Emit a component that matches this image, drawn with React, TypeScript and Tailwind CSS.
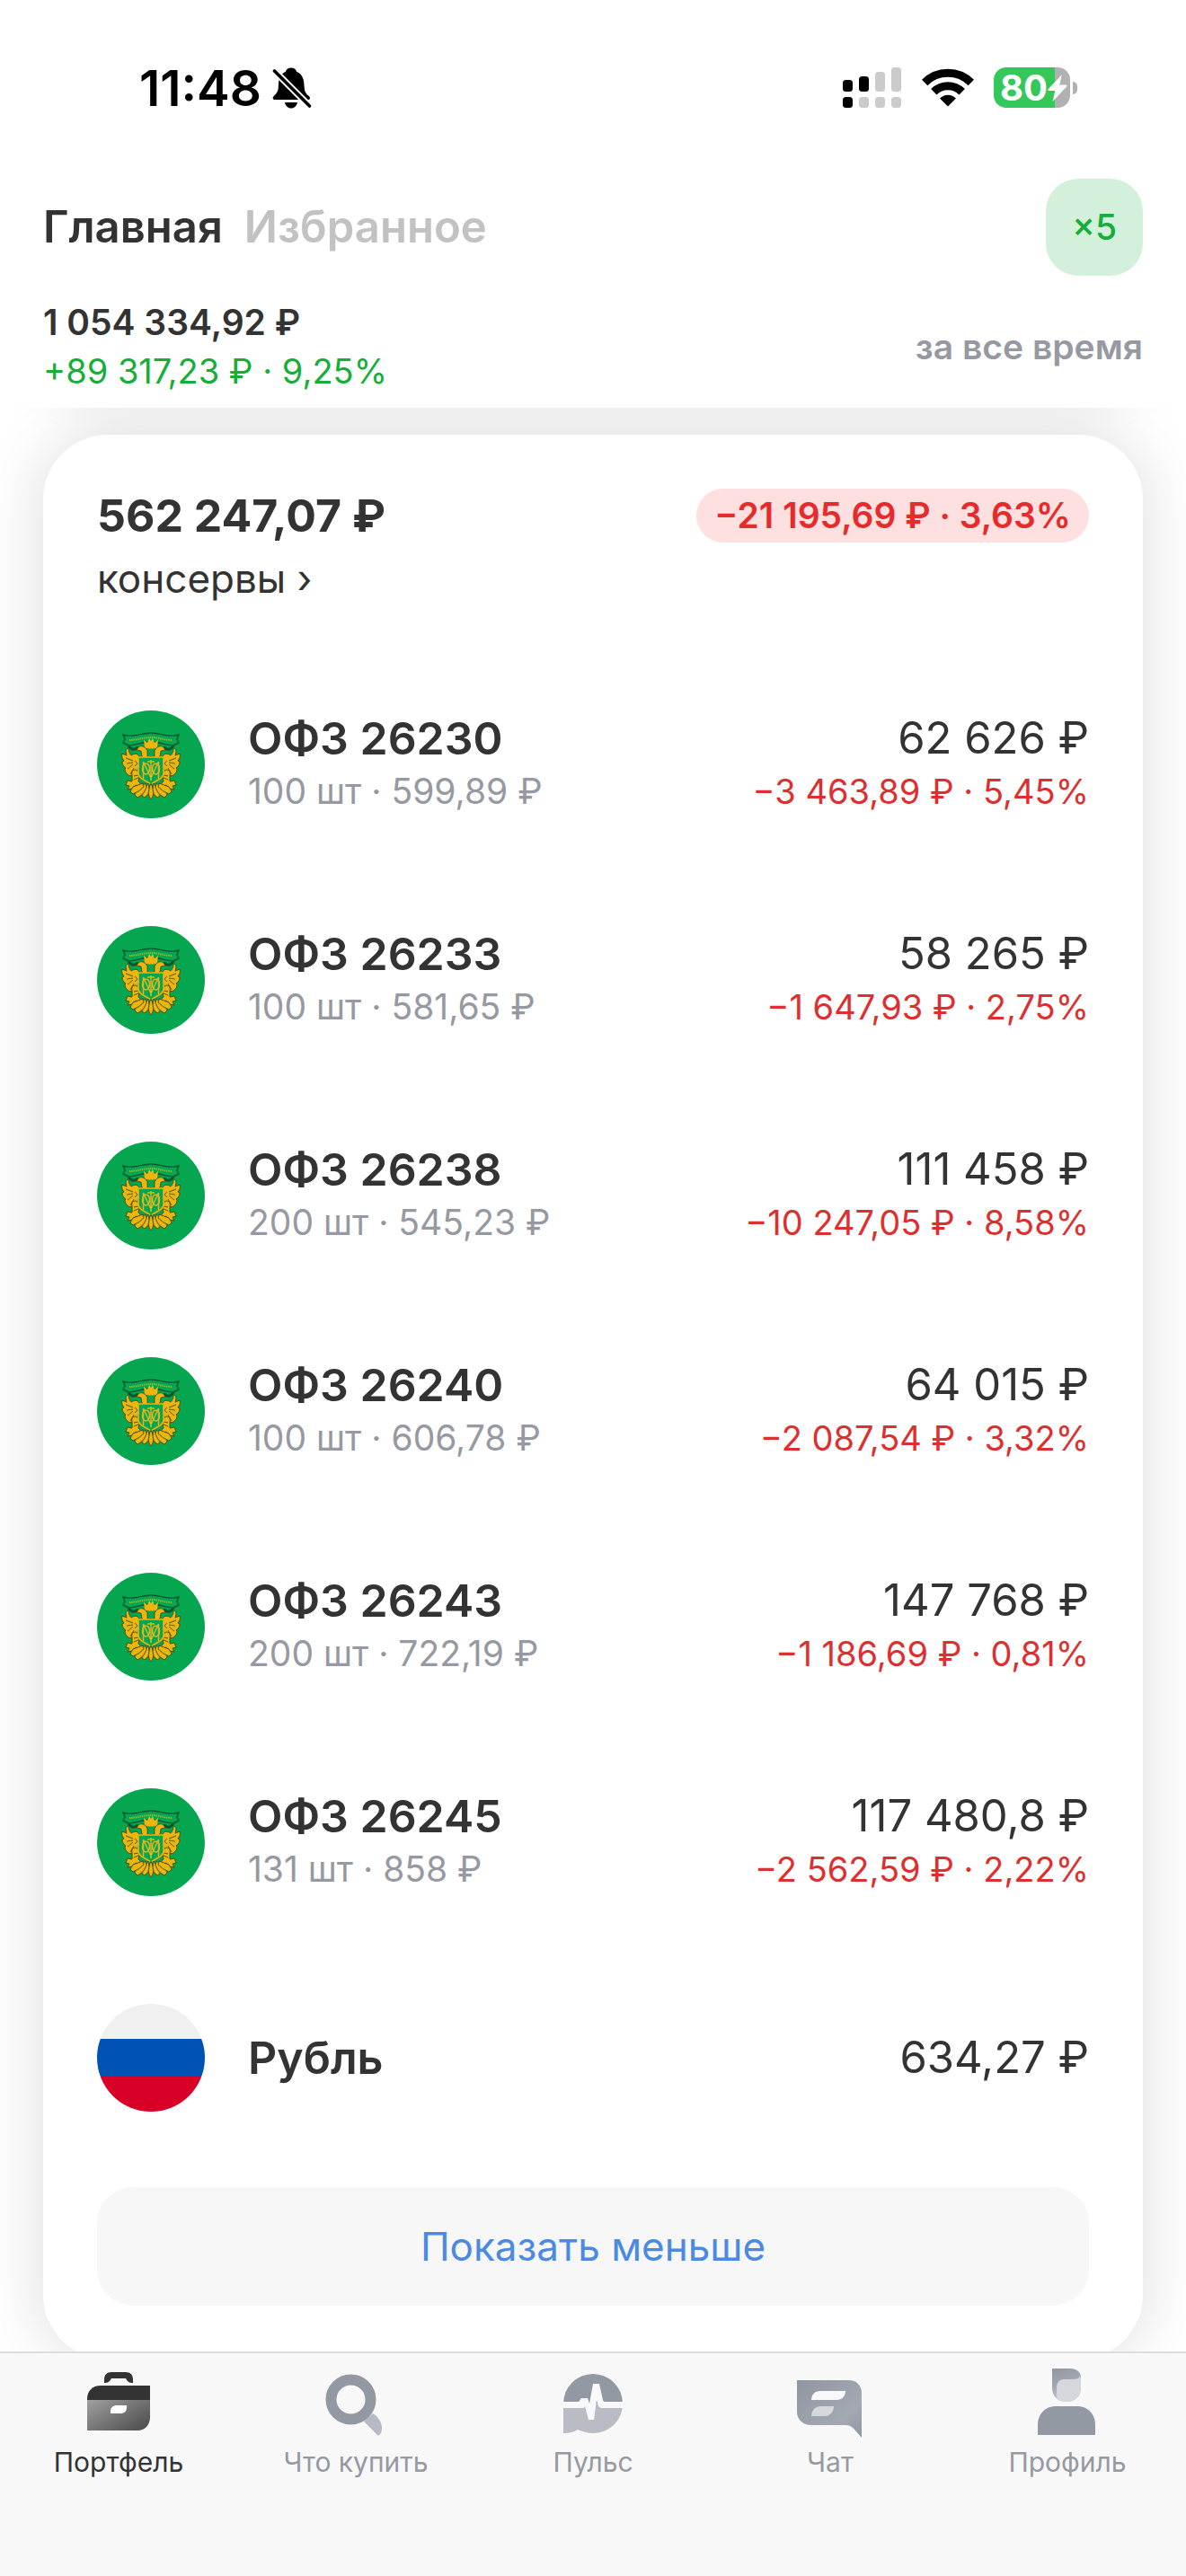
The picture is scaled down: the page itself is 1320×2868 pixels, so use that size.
import { useState } from "react";

interface Holding {
  name: string;
  details?: string;
  value: string;
  change?: string;
}

const holdings: Holding[] = [
  { name: "ОФЗ 26230", details: "100 шт · 599,89 ₽", value: "62 626 ₽", change: "−3 463,89 ₽ · 5,45%" },
  { name: "ОФЗ 26233", details: "100 шт · 581,65 ₽", value: "58 265 ₽", change: "−1 647,93 ₽ · 2,75%" },
  { name: "ОФЗ 26238", details: "200 шт · 545,23 ₽", value: "111 458 ₽", change: "−10 247,05 ₽ · 8,58%" },
  { name: "ОФЗ 26240", details: "100 шт · 606,78 ₽", value: "64 015 ₽", change: "−2 087,54 ₽ · 3,32%" },
  { name: "ОФЗ 26243", details: "200 шт · 722,19 ₽", value: "147 768 ₽", change: "−1 186,69 ₽ · 0,81%" },
  { name: "ОФЗ 26245", details: "131 шт · 858 ₽", value: "117 480,8 ₽", change: "−2 562,59 ₽ · 2,22%" },
  { name: "Рубль", value: "634,27 ₽" },
];

const BellOffIcon = () => (
  <svg width="44" height="46" viewBox="0 0 44 46" aria-hidden="true">
    <path
      d="M21 .5c3.500 0 5.500 1.800 6 4.200 5.200 2 8 6.800 8.300 12.800l.5 6c.3 4 2 6.200 5 8.400 2 1.700 1.500 4.100-1.300 4.100H3c-2.600 0-3-2.600-1.200-4.300C4.500 29.400 6.400 27.200 6.700 23.500l.4-6C7.400 11.500 10 6.700 15 4.700 15.600 2.300 17.500.5 21 .5ZM14 39h14c-.8 4-3.500 6.500-7 6.500s-6.200-2.500-7-6.500Z"
      fill="#000"
    />
    <path d="M1 2.500 43 44.500" stroke="#fff" strokeWidth="7.500" />
    <path d="M2.500 4 41.500 43" stroke="#000" strokeWidth="3.600" strokeLinecap="round" />
  </svg>
);

const SignalIcon = () => (
  <svg width="66" height="46" viewBox="0 0 66 46" aria-hidden="true">
    <g fill="#000">
      <rect x="0" y="14" width="11" height="13" rx="3.500" />
      <rect x="18" y="10" width="11" height="17" rx="3.500" />
      <rect x="0" y="33" width="11" height="12" rx="3.500" />
    </g>
    <g fill="#cbcbcb">
      <rect x="36" y="5" width="11" height="22" rx="3.500" />
      <rect x="54" y="0" width="11" height="27" rx="3.500" />
      <rect x="18" y="33" width="11" height="12" rx="3.500" />
      <rect x="36" y="33" width="11" height="12" rx="3.500" />
      <rect x="54" y="33" width="11" height="12" rx="3.500" />
    </g>
  </svg>
);

const WifiIcon = () => (
  <svg width="58" height="43" viewBox="0 0 58 43" aria-hidden="true">
    <g fill="none" stroke="#000" strokeWidth="9">
      <path d="M3.200 16A36.500 36.500 0 0 1 54.800 16" />
      <path d="M13.300 26.200A22.200 22.200 0 0 1 44.700 26.200" />
    </g>
    <path d="M29 42.500 20 33.500a12.600 12.600 0 0 1 18 0Z" fill="#000" />
  </svg>
);

const Battery = () => (
  <div className="flex items-center gap-[3px]">
    <div className="flex h-[45px] w-[85px] items-center rounded-[14px] bg-[linear-gradient(to_right,#34c759_80%,#b1b1b1_80%)] pl-[7px]">
      <span className="text-[40px] leading-[45px] font-bold text-white">80</span>
      <svg width="22" height="30" viewBox="0 0 22 30" aria-hidden="true">
        <path d="M16 0 .8 16c-.9 1-.5 2 .8 2h6.800L5.500 30 21 13.600c.9-1 .5-2-.8-2h-7Z" fill="#fff" />
      </svg>
    </div>
    <div className="h-[14px] w-[5px] rounded-r-full bg-[#b1b1b1]" />
  </div>
);

const wing = (
  <g stroke="#3f4a12" strokeWidth="0.900">
    <path d="M47 51c-2-4-6-3-9-1-2-2-3-5-3-8-2 0-3 2-3 4l1 4-5-2c-1 3 0 6 2 8l-2 1c0 3 1 5 4 7l-1 1c0 3 1 5 4 7 1 1 3 1 4 0l1-4 4 2 2-6Z" />
    <path d="M39 72c-1-4 1-6 4-6 3 1 4 4 4 8l-1 5c2 1 3 4 3 6l-6-2-4 4-5 1 2-4-4-1 2-5 5 1Z" />
    <path d="M32 53l8 3M33 59l7-1M34 65l6-5M37 71l4-7M42 56l3 3-3 3M41 73l5-1M41 77l5-2" fill="none" />
  </g>
);

const OfzLogo = () => (
  <svg className="size-[120px] shrink-0" viewBox="0 0 120 120" aria-hidden="true">
    <circle cx="60" cy="60" r="60" fill="#06a651" />
    <path
      d="M34 28c9 1 17-3 26-3s17 4 26 3l5-1-2 5 2 4-6 3c-8 0-15-4-25-4s-17 4-25 4l-6-3 2-4-2-5Z"
      fill="#06a651"
      stroke="#07562d"
      strokeWidth="1.400"
    />
    <path d="M36 33c8 0 16-3 24-3s16 3 24 3" fill="none" stroke="#8fbf2c" strokeWidth="2" strokeDasharray="1.400 0.900" />
    <path d="M35 39c3 5 8 6 10 1M85 39c-3 5-8 6-10 1" fill="none" stroke="#07562d" strokeWidth="3" />
    <g fill="#edb60f">
      {wing}
      <g transform="matrix(-1 0 0 1 120 0)">{wing}</g>
      <path d="m53 41-1-8 4 3 2-5 2 3 2-3 2 5 4-3-1 8c-3 2-11 2-14 0Z" />
      <path d="M56 52V45c-2-4-5-6-9-5l-3 4 5 1 1 6 4 2h12l4-2 1-6 5-1-3-4c-4-1-7 1-9 5v7Z" stroke="#3f4a12" strokeWidth=".8" />
    </g>
    <path d="M46 52h28v18c0 5-6 7-14 12-8-5-14-7-14-12Z" fill="#06a651" stroke="#edb60f" strokeWidth="1.600" />
    <g fill="none" stroke="#d8b81a" strokeWidth="1.500">
      <path d="M51.500 76V57l8.500 18 8.500-18v19M60 55v23M56 57h8" />
      <ellipse cx="54.500" cy="65" rx="4" ry="6" />
      <ellipse cx="65.500" cy="65" rx="4" ry="6" />
    </g>
    <g fill="#edb60f" stroke="#3f4a12" strokeWidth="0.900">
      <path d="m60 81-3 8 1 7 2 3 2-3 1-7Z" />
      <path d="m57 81-6 9-1 5 3 2 4-4 1-5ZM63 81l6 9 1 5-3 2-4-4-1-5Z" />
      <path d="m54 81-10 8-2 5 3 3 6-4 4-7ZM66 81l10 8 2 5-3 3-6-4-4-7Z" />
      <path d="m51 81-11 4-3 5 3 3 6-3 6-5ZM69 81l11 4 3 5-3 3-6-3-6-5Z" />
    </g>
  </svg>
);

const RubleFlag = () => (
  <div className="flex size-[120px] shrink-0 flex-col overflow-hidden rounded-full">
    <div className="h-[39px] bg-[#f0f0f0]" />
    <div className="flex-1 bg-[#0052b4]" />
    <div className="h-[39px] bg-[#d80027]" />
  </div>
);

const PortfolioIcon = () => (
  <svg width="80" height="80" viewBox="0 0 80 80" aria-hidden="true">
    <defs>
      <linearGradient id="case" x1="0" y1="0" x2="1" y2="0.800">
        <stop offset="0" stopColor="#a0a0a0" />
        <stop offset="1" stopColor="#505050" />
      </linearGradient>
    </defs>
    <path d="M24 18v-4c0-5 3-8 8-8h16c5 0 8 3 8 8v4c-4 0-6-1-8-5H32c-2 4-4 5-8 5Z" fill="#333" />
    <path d="M5 37V36C5 27 11 21 20 21H75V37Z" fill="#333" />
    <path d="M5 37H75V56C75 65 69 71 61 71H5Z" fill="url(#case)" />
    <path d="M31 52v-2c0-5 3-7 7-7h11v2c0 5-3 7-7 7Z" fill="#fff" />
  </svg>
);

const SearchIcon = () => (
  <svg width="80" height="80" viewBox="0 0 80 80" aria-hidden="true">
    <path d="M59 52c6 4 10 10 10 16 0 4-1 7-4 9L49 61Z" fill="#b7bac4" />
    <circle cx="34.500" cy="36.500" r="22" fill="none" stroke="#9299a2" strokeWidth="12" />
  </svg>
);

const PulseIcon = () => (
  <svg width="80" height="80" viewBox="0 0 80 80" aria-hidden="true">
    <path d="M7 41a33 33 0 0 1 66 0Z" fill="#9299a2" />
    <path d="M7 41h66c0 19-15 33-33 33-6 0-12-2-17-4-5 3-10 4-16 4Z" fill="#b9bcc5" />
    <path
      d="M6 39h18l3-4h7l2 6 4-22h7l4 18c.5 1.500 1 2 3 2h20v7H51c-4 0-5-2-6-5l-1-4-3 22h-6l-4-15c-1 2-2 2-4 2H6Z"
      fill="#f9f9fb"
    />
  </svg>
);

const ChatIcon = () => (
  <svg width="80" height="80" viewBox="0 0 80 80" aria-hidden="true">
    <defs>
      <linearGradient id="bubble" x1="0" y1="0" x2="1" y2="1">
        <stop offset="0" stopColor="#8f96a0" />
        <stop offset="0.700" stopColor="#a3a9b1" />
        <stop offset="1" stopColor="#8f96a0" />
      </linearGradient>
    </defs>
    <path d="M3 15h58c8 0 14 6 14 14v50l-7-8c-4-5-7-6-12-6H19C10 65 3 59 3 50Z" fill="url(#bubble)" />
    <path d="M19 37c0-6 4-10 10-10h28c0 6-4 10-10 10Z" fill="#f9f9fb" />
    <path d="M19 55c0-6 4-11 10-11h15c0 6-4 11-10 11Z" fill="#d4d8dd" />
  </svg>
);

const ProfileIcon = () => (
  <svg width="80" height="80" viewBox="0 0 80 80" aria-hidden="true">
    <defs>
      <linearGradient id="hair" x1="0.300" y1="0" x2="0.600" y2="1">
        <stop offset="0" stopColor="#9299a2" />
        <stop offset="0.500" stopColor="#a5abb3" />
        <stop offset="1" stopColor="#d3d6da" />
      </linearGradient>
    </defs>
    <path d="M23 2h20c7 0 12 4 12 10v11c0 10-6 16-16 16s-16-6-16-16Z" fill="url(#hair)" />
    <path d="M29 37c-1-3-1-8-1-13 0-7 3-10 9-10h9c4 0 7-1 8-4l1 3v10c0 10-6 16-16 16-4 0-7-1-10-2Z" fill="#d4d7db" />
    <path d="M7 76V65c0-12 8-21 20-21h24c12 0 20 9 20 21v11Z" fill="#9299a2" />
  </svg>
);

const navItems = [
  { id: "portfolio", label: "Портфель", icon: PortfolioIcon },
  { id: "buy", label: "Что купить", icon: SearchIcon },
  { id: "pulse", label: "Пульс", icon: PulseIcon },
  { id: "chat", label: "Чат", icon: ChatIcon },
  { id: "profile", label: "Профиль", icon: ProfileIcon },
];

const StatusBar = () => (
  <div className="flex h-[199px] shrink-0 items-center justify-between pr-[121px] pb-1 pl-[155px]">
    <div className="flex items-center gap-3">
      <span className="text-[55px] leading-[60px] font-semibold text-black">11:48</span>
      <BellOffIcon />
    </div>
    <div className="flex items-center gap-[22px]">
      <SignalIcon />
      <WifiIcon />
      <Battery />
    </div>
  </div>
);

const HoldingRow = ({ item }: { item: Holding }) => (
  <li className="flex h-[240px] items-center gap-12">
    {item.details ? <OfzLogo /> : <RubleFlag />}
    <div className="min-w-0 flex-1">
      <p className="text-[50px] leading-[60px] font-semibold">{item.name}</p>
      {item.details && <p className="text-[39px] leading-[58px] text-[#9699a1]">{item.details}</p>}
    </div>
    <div className="text-right">
      <p className="text-[49px] leading-[60px]">{item.value}</p>
      {item.change && <p className="text-[38px] leading-[58px] text-[#dd2f2f]">{item.change}</p>}
    </div>
  </li>
);

export default function App() {
  const [tab, setTab] = useState("main");
  const [active, setActive] = useState("portfolio");
  const [expanded, setExpanded] = useState(true);

  return (
    <div className="flex h-screen flex-col overflow-hidden bg-white font-['Inter',sans-serif] text-[#333]">
      <StatusBar />

      <header className="relative z-10 shrink-0 bg-white px-12 pb-[14px]">
        <div className="flex items-center justify-between">
          <div className="flex gap-6 text-[49px] leading-[60px] font-semibold">
            <button onClick={() => setTab("main")} className={tab === "main" ? "text-[#333]" : "text-[#c2c2c2]"}>
              Главная
            </button>
            <button onClick={() => setTab("favorites")} className={tab === "favorites" ? "text-[#333]" : "text-[#c2c2c2]"}>
              Избранное
            </button>
          </div>
          <button className="size-[108px] rounded-[36px] bg-[#d3f1da] text-[39px] font-medium text-[#14ae39]">×5</button>
        </div>
        <div className="mt-[25px] flex items-center justify-between">
          <div className="leading-[54px]">
            <p className="text-[39px] font-semibold">1 054 334,92 ₽</p>
            <p className="text-[38px] text-[#14ae39]">+89 317,23 ₽ · 9,25%</p>
          </div>
          <button className="text-[39px] font-semibold text-[#9699a1]">за все время</button>
        </div>
      </header>

      <main className="min-h-0 flex-1 overflow-y-auto px-12 [scrollbar-width:none]">
        {/* lower edge of the card scrolled under the header */}
        <div className="-mt-[124px] mb-[54px] h-[100px] rounded-[72px] bg-white shadow-[0_0_72px_rgba(0,0,0,0.15)]" />
        <section className="rounded-[72px] bg-white px-[60px] py-[60px] shadow-[0_0_72px_rgba(0,0,0,0.14)]">
          <div className="flex items-center justify-between">
            <h2 className="text-[50px] leading-[60px] font-bold">562 247,07 ₽</h2>
            <span className="rounded-full bg-[#fee0e0] px-5 text-[39px] leading-[60px] font-semibold text-[#e52b2b]">
              −21 195,69 ₽ · 3,63%
            </span>
          </div>
          <a href="#group" className="mt-3 block text-[44px] leading-[56px]">
            консервы ›
          </a>

          <ul className="mt-[59px]">
            {(expanded ? holdings : holdings.slice(0, 3)).map((item) => (
              <HoldingRow key={item.name} item={item} />
            ))}
          </ul>

          <button
            onClick={() => setExpanded((e) => !e)}
            className="mt-6 h-[132px] w-full rounded-[40px] bg-[#f7f7f8] text-[44px] text-[#4a8ae0]"
          >
            {expanded ? "Показать меньше" : "Показать больше"}
          </button>
        </section>
      </main>

      <nav className="relative z-10 grid h-[250px] shrink-0 grid-cols-5 border-t-2 border-[#dcdddf] bg-[#f8f8f9] pt-[15px]">
        {navItems.map((item) => (
          <a
            key={item.id}
            href={`#${item.id}`}
            onClick={() => setActive(item.id)}
            className={`flex flex-col items-center gap-1.5 text-[30px] leading-[40px] ${
              active === item.id ? "text-[#333]" : "text-[#9699a1]"
            }`}
          >
            <item.icon />
            {item.label}
          </a>
        ))}
      </nav>
    </div>
  );
}
